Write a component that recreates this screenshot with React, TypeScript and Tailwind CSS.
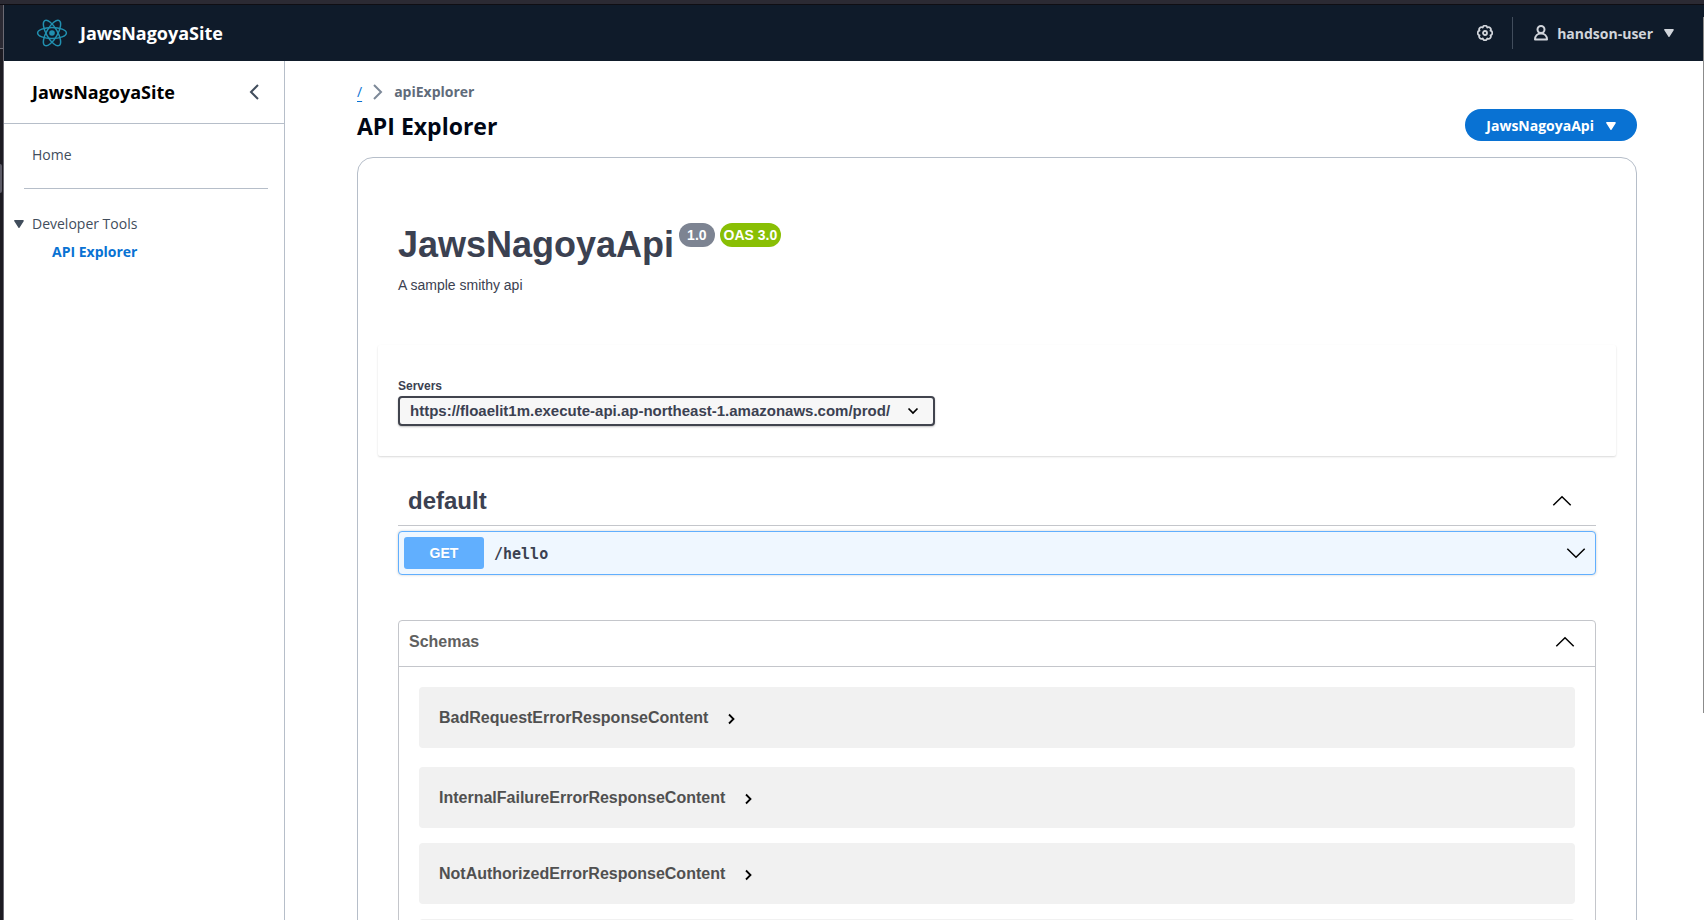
import React from "react";

function Chevron({ dir }: { dir: "up" | "down" }) {
  return (
    <svg width="20" height="20" viewBox="0 0 20 20" aria-hidden="true" className="shrink-0">
      <path
        d={dir === "up" ? "M1.3 14.2L10 5.8l8.7 8.4" : "M1.3 5.8L10 14.2l8.7-8.4"}
        fill="none"
        stroke="#000"
        strokeWidth="1.5"
      />
    </svg>
  );
}

function Caret({ className = "" }: { className?: string }) {
  return (
    <svg width="10" height="8" viewBox="0 0 10 8" aria-hidden="true" className={className}>
      <path d="M1 .8h8L5 7.2z" fill="currentColor" stroke="currentColor" strokeWidth="1.6" strokeLinejoin="round" />
    </svg>
  );
}

function Logo() {
  return (
    <svg width="32" height="32" viewBox="-16 -16 32 32" fill="none" stroke="#2190b0" strokeWidth="1.5" aria-hidden="true">
      <circle r="2.8" fill="#2190b0" stroke="none" />
      <ellipse rx="14.4" ry="5.5" />
      <ellipse rx="14.4" ry="5.5" transform="rotate(60)" />
      <ellipse rx="14.4" ry="5.5" transform="rotate(120)" />
    </svg>
  );
}

function Header() {
  return (
    <header className="flex h-14 shrink-0 items-center justify-between bg-[#0f1b2a] pr-[30px] pl-8">
      <a href="#home" className="flex items-center gap-3 text-lg font-bold text-white">
        <Logo />
        JawsNagoyaSite
      </a>
      <div className="flex items-center text-sm font-bold text-[#d1d5db]">
        <button type="button" aria-label="Settings" className="mr-[19px]">
          <svg width="16" height="16" viewBox="0 0 16 16" fill="none" stroke="currentColor" strokeWidth="1.8" strokeLinejoin="round" aria-hidden="true">
            <path d="M13.450 5.740A2.300 2.300 0 0 1 13.450 10.260A2.300 2.300 0 0 1 10.260 13.450A2.300 2.300 0 0 1 5.740 13.450A2.300 2.300 0 0 1 2.550 10.260A2.300 2.300 0 0 1 2.550 5.740A2.300 2.300 0 0 1 5.740 2.550A2.300 2.300 0 0 1 10.260 2.550A2.300 2.300 0 0 1 13.450 5.740z" />
            <circle cx="8" cy="8" r="2" />
          </svg>
        </button>
        <span className="h-8 w-px bg-[#414d5c]" />
        <button type="button" className="flex items-center pl-5">
          <svg width="16" height="16" viewBox="0 0 16 16" fill="none" stroke="currentColor" strokeWidth="2" strokeLinejoin="round" aria-hidden="true">
            <circle cx="8" cy="4.5" r="3.5" />
            <path d="M2 14.5c0-3.500 2.500-6 6-6s6 2.500 6 6z" />
          </svg>
          <span className="ml-2 pt-0.5">handson-user</span>
          <Caret className="ml-[11px]" />
        </button>
      </div>
    </header>
  );
}

function Sidebar() {
  return (
    <nav className="w-[281px] shrink-0 border-r border-[#b6bec9] text-sm leading-5 text-[#414d5c]">
      <div className="flex h-[63px] items-center justify-between border-b border-[#b6bec9] pr-[22px] pl-7">
        <a href="#home" className="text-lg font-bold text-black">JawsNagoyaSite</a>
        <button type="button" aria-label="Close navigation">
          <svg width="16" height="16" viewBox="0 0 16 16" fill="none" stroke="#414d5c" strokeWidth="2" aria-hidden="true">
            <path d="M12 1L5 8l7 7" />
          </svg>
        </button>
      </div>
      <div className="pt-[21px] pl-7">
        <a href="#home">Home</a>
      </div>
      <hr className="mt-[23px] mr-4 ml-5 border-[#b6bec9]" />
      <div className="pt-[25px]">
        <button type="button" className="flex items-center gap-2 pl-[10px]">
          <Caret />
          Developer Tools
        </button>
        <a href="#api" className="mt-2 ml-12 block font-bold text-[#0972d3]">API Explorer</a>
      </div>
    </nav>
  );
}

const SCHEMAS = [
  "BadRequestErrorResponseContent",
  "InternalFailureErrorResponseContent",
  "NotAuthorizedErrorResponseContent",
];

function ApiDocs() {
  return (
    <section className="rounded-2xl border border-[#b6bec9] px-5 pb-10 font-['Liberation_Sans',sans-serif] text-[#3b4151]">
      <div className="px-5 pt-[65px]">
        <div className="flex items-start">
          <h2 className="text-4xl leading-[44px] font-bold">JawsNagoyaApi</h2>
          <span className="ml-[5px] rounded-full bg-[#7d8492] px-2 text-sm leading-6 font-bold text-white">1.0</span>
          <span className="ml-[5px] rounded-full bg-[#89bf04] px-1 text-sm leading-6 font-bold text-white">OAS 3.0</span>
        </div>
        <p className="mt-2 text-sm leading-5">A sample smithy api</p>
      </div>

      <div className="mt-[50px] rounded-xs bg-white px-5 pt-[31px] pb-[30px] shadow-[0_1px_2px_0_rgba(0,0,0,0.15)]">
        <label htmlFor="server" className="block text-xs leading-5 font-bold">Servers</label>
        <div className="relative w-[537px] max-w-full">
          <select
            id="server"
            className="block h-[30px] w-full appearance-none rounded border-2 border-[#41444e] bg-[#f7f7f7] pr-10 pl-[10px] text-[15px] font-bold shadow-[0_1px_2px_0_rgba(0,0,0,0.25)]"
          >
            <option>https://floaelit1m.execute-api.ap-northeast-1.amazonaws.com/prod/</option>
          </select>
          <svg width="12" height="8" viewBox="0 0 12 8" className="pointer-events-none absolute top-[11px] right-4" aria-hidden="true">
            <path d="M1.500 1.500L6 6l4.500-4.500" fill="none" stroke="#000" strokeWidth="1.700" />
          </svg>
        </div>
      </div>

      <div className="px-5 pt-[18px]">
        <button type="button" className="flex h-[52px] w-full items-center justify-between border-b border-[#c4c6cb] pt-0.5 pr-6 pl-[10px] text-2xl font-bold">
          default
          <Chevron dir="up" />
        </button>

        <button
          type="button"
          className="mt-[5px] flex w-full items-center rounded border border-[#61affe] bg-[#eff7ff] py-[5px] pr-[9px] pl-[5px] shadow-[0_0_3px_rgba(0,0,0,0.19)]"
        >
          <span className="w-20 rounded-[3px] bg-[#61affe] text-center text-sm leading-8 font-bold text-white [text-shadow:0_1px_0_rgba(0,0,0,0.1)]">GET</span>
          <span className="ml-[10px] flex-1 pt-0.5 text-left font-['DejaVu_Sans_Mono',monospace] text-[15px] font-bold">/hello</span>
          <Chevron dir="down" />
        </button>

        <section className="mt-[45px] rounded border border-[#c4c6cb]">
          <button type="button" className="flex h-[46px] w-full items-center justify-between border-b border-[#c4c6cb] pr-5 pb-1 pl-[10px] text-base font-bold text-[#606060]">
            Schemas
            <Chevron dir="up" />
          </button>
          <div className="flex flex-col gap-[15px] p-5">
            {SCHEMAS.map((name, i) => (
              <div key={name} className={i === 0 ? "mb-1 rounded bg-[#f1f1f1]" : "rounded bg-[#f1f1f1]"}>
                <button type="button" className="flex h-[61px] w-full items-center pl-5 text-base font-bold text-[#505050]">
                  {name}
                  <svg width="8" height="12" viewBox="0 0 8 12" className="mt-0.5 ml-5" aria-hidden="true">
                    <path d="M1 1.500L5.500 6 1 10.500" fill="none" stroke="#000" strokeWidth="1.800" />
                  </svg>
                </button>
              </div>
            ))}
            <div className="h-[61px] rounded bg-[#f1f1f1]" />
          </div>
        </section>
      </div>
    </section>
  );
}

export default function App() {
  return (
    <div className="flex h-screen flex-col overflow-hidden bg-[#1c1b22] font-['Open_Sans',sans-serif]">
      <div className="h-[5px] shrink-0 border-b border-[#0f0e13] bg-[#2b2a33]" />
      <div className="flex min-h-0 flex-1">
        <div className="flex w-1 shrink-0 flex-col border-r border-[#6b6a73]">
          <div className="h-11 border-b border-[#6b6a73] bg-[#2b2a33]" />
          <div className="mt-[115px] mr-px h-[29px] rounded-r bg-[#5b5a66]" />
        </div>
        <div className="flex min-w-0 flex-1 flex-col bg-white">
          <Header />
          <div className="flex min-h-0 flex-1">
            <Sidebar />
            <main className="min-w-0 flex-1 overflow-y-auto pr-[67px] pl-[72px] [scrollbar-width:none]">
              <nav aria-label="Breadcrumb" className="flex items-center pt-[21px] text-sm leading-5">
                <a href="#root" className="text-[#0972d3] underline underline-offset-4">/</a>
                <svg width="16" height="16" viewBox="0 0 16 16" fill="none" stroke="#7d8998" strokeWidth="2" className="mx-2" aria-hidden="true">
                  <path d="M4 1l7 7-7 7" />
                </svg>
                <span className="font-bold text-[#5f6b7a]">apiExplorer</span>
              </nav>
              <div className="flex items-center justify-between pt-[7px] pb-4">
                <h1 className="pt-0.5 text-[23px] leading-[30px] font-bold text-[#000716]">API Explorer</h1>
                <button type="button" className="flex h-8 items-center gap-3 rounded-full bg-[#0972d3] px-[21px] pt-px text-sm font-bold text-white">
                  JawsNagoyaApi
                  <Caret />
                </button>
              </div>
              <ApiDocs />
            </main>
          </div>
        </div>
      </div>
      <div className="absolute top-[17px] right-0 h-[696px] w-px bg-[#8b8b8b]" />
    </div>
  );
}
